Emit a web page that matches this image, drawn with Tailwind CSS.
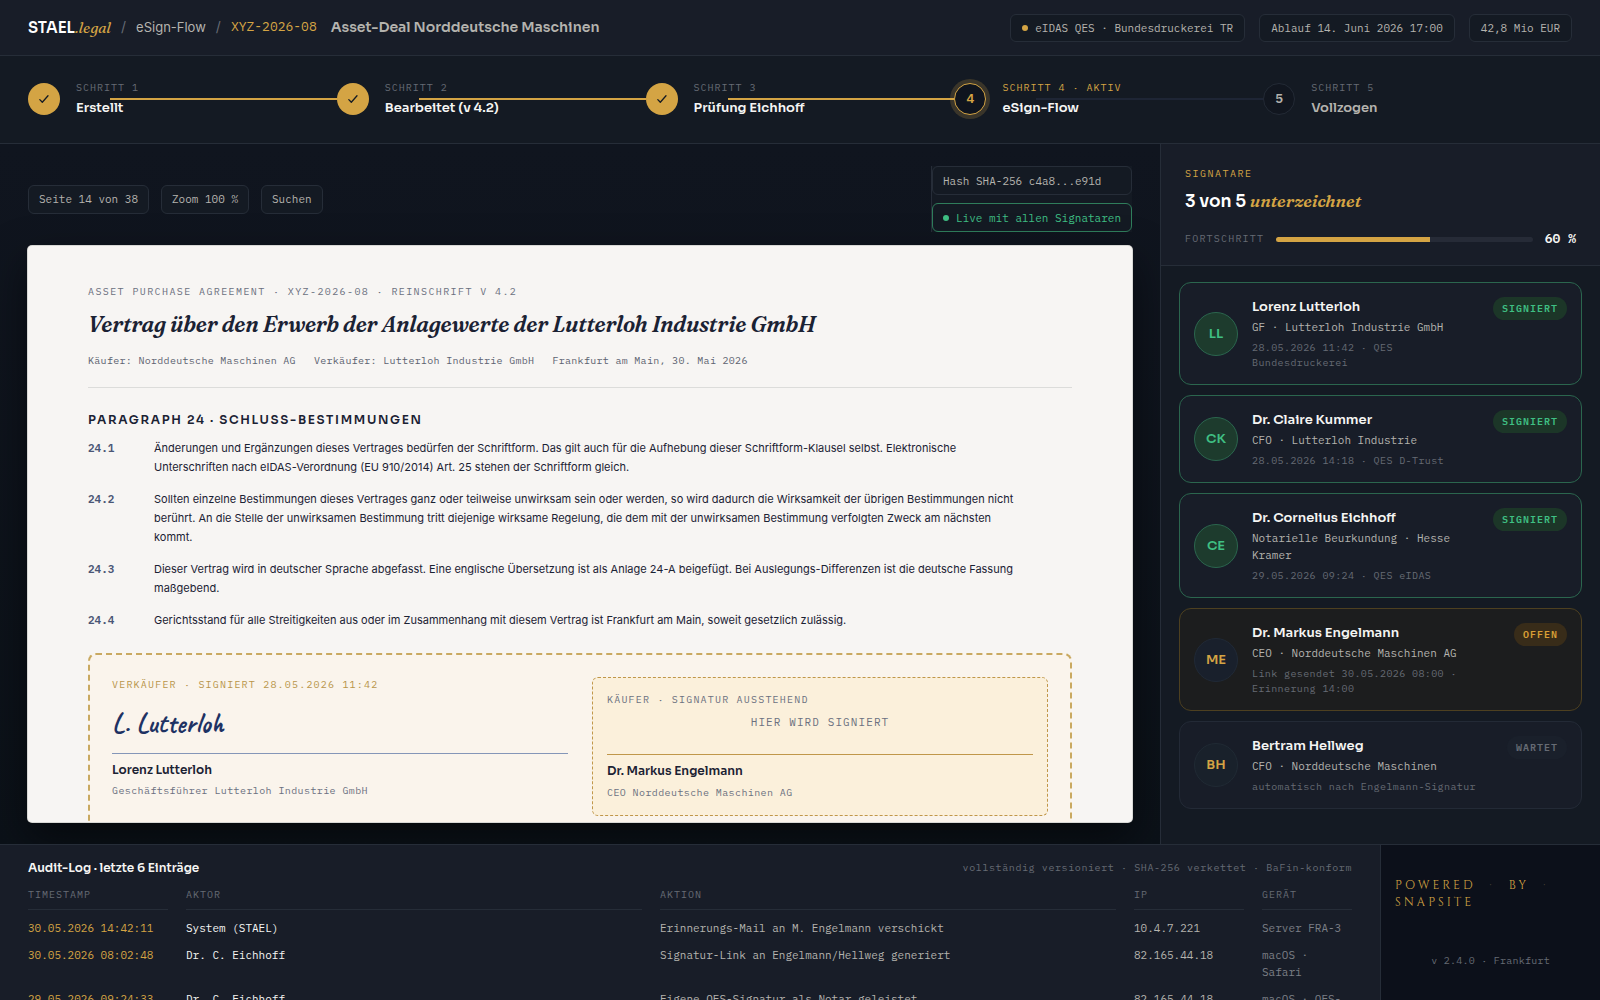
<!DOCTYPE html>
<html lang="de">
<head>
    <meta charset="UTF-8">
    <meta name="viewport" content="width=device-width, initial-scale=1.0">
    <title>STAEL.legal – eSign-Flow XYZ-2026-08</title>
    <script src="https://cdn.jsdelivr.net/npm/@tailwindcss/browser@4"></script>
    <style>
        :root {
            --font-sans: 'Sora', 'Inter', sans-serif;
            --font-serif: 'Fraunces', 'Liberation Serif', serif;
            --font-mono: 'IBM Plex Mono', 'Liberation Mono', monospace;
        }
    </style>
</head>
<body class="h-screen flex flex-col overflow-hidden bg-[#0f141e] font-sans text-[#f5f5f3]">

    <!-- Top bar -->
    <header class="flex items-center justify-between shrink-0 h-14 px-7 bg-[#181d28] border-b border-[#262d38]">
        <div class="flex items-center">
            <nav class="flex items-center gap-2.5 font-['Inter',sans-serif] text-sm text-[#b4b3ae]">
                <a href="#" class="flex items-baseline font-sans font-semibold text-[15px] text-white">STAEL<span class="font-serif italic font-medium text-[15px] text-[#d4a444]">.legal</span></a>
                <span class="text-[#666b74]">/</span>
                <a href="#" class="text-[13px]">eSign-Flow</a>
                <span class="text-[#666b74]">/</span>
                <a href="#" class="font-mono text-[13px] text-[#d4a444]">XYZ-2026-08</a>
            </nav>
            <h1 class="ml-3.5 text-sm font-semibold text-[#b4b3ae]">Asset-Deal Norddeutsche Maschinen</h1>
        </div>
        <div class="flex gap-3.5 font-mono text-[11px] leading-4 text-[#b4b3ae]">
            <span class="flex items-center gap-[7px] h-7 px-[11px] rounded-md border border-[#262d38] bg-[#141a23]"><i class="size-1.5 rounded-full bg-[#d4a444]"></i>eIDAS QES · Bundesdruckerei TR</span>
            <span class="flex items-center h-7 px-[11px] rounded-md border border-[#262d38] bg-[#141a23]">Ablauf 14. Juni 2026 17:00</span>
            <span class="flex items-center h-7 px-[11px] rounded-md border border-[#262d38] bg-[#141a23]">42,8 Mio EUR</span>
        </div>
    </header>

    <!-- Stepper -->
    <ol class="grid grid-cols-5 shrink-0 px-7 pt-[22px] pb-6 bg-[#141a23] border-b border-[#262d38]">
        <li class="relative flex items-center gap-4">
            <span class="flex items-center justify-center size-8 rounded-full bg-[#d4a444]">
                <svg class="size-3.5" viewBox="0 0 14 14" fill="none" stroke="#141a23" stroke-width="1.3" stroke-linecap="round" stroke-linejoin="round"><path d="M2.8 7.6 5.3 10.2 11 3.8"/></svg>
            </span>
            <div class="pt-0.5">
                <p class="font-mono text-[10px] leading-4 tracking-[0.1em] text-[#666b74]">SCHRITT 1</p>
                <p class="mt-px text-[13px] leading-[22px] font-semibold">Erstellt</p>
            </div>
            <i class="absolute left-[82px] right-0 top-1/2 h-0.5 -mt-px bg-[#d4a444]"></i>
        </li>
        <li class="relative flex items-center gap-4">
            <span class="flex items-center justify-center size-8 rounded-full bg-[#d4a444]">
                <svg class="size-3.5" viewBox="0 0 14 14" fill="none" stroke="#141a23" stroke-width="1.3" stroke-linecap="round" stroke-linejoin="round"><path d="M2.8 7.6 5.3 10.2 11 3.8"/></svg>
            </span>
            <div class="pt-0.5">
                <p class="font-mono text-[10px] leading-4 tracking-[0.1em] text-[#666b74]">SCHRITT 2</p>
                <p class="mt-px text-[13px] leading-[22px] font-semibold">Bearbeitet (v 4.2)</p>
            </div>
            <i class="absolute left-[82px] right-0 top-1/2 h-0.5 -mt-px bg-[#d4a444]"></i>
        </li>
        <li class="relative flex items-center gap-4">
            <span class="flex items-center justify-center size-8 rounded-full bg-[#d4a444]">
                <svg class="size-3.5" viewBox="0 0 14 14" fill="none" stroke="#141a23" stroke-width="1.3" stroke-linecap="round" stroke-linejoin="round"><path d="M2.8 7.6 5.3 10.2 11 3.8"/></svg>
            </span>
            <div class="pt-0.5">
                <p class="font-mono text-[10px] leading-4 tracking-[0.1em] text-[#666b74]">SCHRITT 3</p>
                <p class="mt-px text-[13px] leading-[22px] font-semibold">Prüfung Eichhoff</p>
            </div>
            <i class="absolute left-[82px] right-0 top-1/2 h-0.5 -mt-px bg-[#d4a444]"></i>
        </li>
        <li class="relative flex items-center gap-4" aria-current="step">
            <span class="flex items-center justify-center size-8 rounded-full border border-[#d4a444] bg-[#0f141e] ring-4 ring-[#d4a444]/20 font-mono text-[13px] font-semibold text-[#d4a444]">4</span>
            <div class="pt-0.5">
                <p class="font-mono text-[10px] leading-4 tracking-[0.1em] text-[#d4a444]">SCHRITT 4 · AKTIV</p>
                <p class="mt-px text-[13px] leading-[22px] font-semibold">eSign-Flow</p>
            </div>
            <i class="absolute left-[82px] right-0 top-1/2 h-0.5 -mt-px bg-[#1e2535]"></i>
        </li>
        <li class="relative flex items-center gap-4">
            <span class="flex items-center justify-center size-8 rounded-full border border-[#232a35] bg-[#11161f] font-mono text-[13px] font-semibold text-[#b4b3ae]">5</span>
            <div class="pt-0.5">
                <p class="font-mono text-[10px] leading-4 tracking-[0.1em] text-[#666b74]">SCHRITT 5</p>
                <p class="mt-px text-[13px] leading-[22px] font-semibold text-[#b4b3ae]">Vollzogen</p>
            </div>
        </li>
    </ol>

    <div class="flex flex-1 min-h-0">

        <!-- Document viewer -->
        <main class="flex flex-col flex-1 min-w-0 px-7 py-[22px] bg-linear-to-b from-[#10151f] to-[#0b1118]">
            <div class="flex items-center justify-between shrink-0 mb-3.5 font-mono text-[11px] leading-4 text-[#b4b3ae]">
                <div class="flex gap-3">
                    <button class="h-[29px] px-2.5 rounded-md border border-[#262d38] bg-[#141a23]">Seite 14 von 38</button>
                    <button class="h-[29px] px-2.5 rounded-md border border-[#262d38] bg-[#141a23]">Zoom 100 %</button>
                    <button class="h-[29px] px-2.5 rounded-md border border-[#262d38] bg-[#141a23]">Suchen</button>
                </div>
                <div class="flex flex-col gap-2 border-l border-[#262d38] bg-[#141a23]">
                    <span class="flex items-center h-[29px] px-2.5 rounded-md border border-[#262d38]">Hash SHA-256 c4a8...e91d</span>
                    <span class="flex items-center gap-[7px] h-[29px] px-2.5 rounded-md border border-[#2f7d5b] text-[#3fbf83]"><i class="size-1.5 rounded-full bg-[#3fbf83]"></i>Live mit allen Signataren</span>
                </div>
            </div>

            <article class="flex-1 min-h-0 overflow-hidden px-[60px] pt-[38px] rounded-sm bg-[#f7f5f3] ring-1 ring-[#d8d8d5] shadow-[0_16px_40px_rgba(0,0,0,0.5)] text-[#1b2233]">
                <p class="font-mono text-[10px] leading-4 tracking-[0.14em] text-[#6b7080]">ASSET PURCHASE AGREEMENT · XYZ-2026-08 · REINSCHRIFT V 4.2</p>
                <h2 class="mt-2 font-serif italic font-semibold text-[22px] leading-8 tracking-[-0.01em]">Vertrag über den Erwerb der Anlagewerte der Lutterloh Industrie GmbH</h2>
                <div class="flex gap-[18px] mt-[13px] pb-[18px] border-b border-[#dcdcda] font-mono text-[10px] leading-4 tracking-[0.03em] text-[#5c6270]">
                    <span>Käufer: Norddeutsche Maschinen AG</span>
                    <span>Verkäufer: Lutterloh Industrie GmbH</span>
                    <span>Frankfurt am Main, 30. Mai 2026</span>
                </div>

                <h3 class="mt-[22px] text-xs leading-5 font-semibold tracking-[0.14em]">PARAGRAPH 24 · SCHLUSS-BESTIMMUNGEN</h3>
                <dl class="grid grid-cols-[50px_1fr] gap-x-4 gap-y-[13px] mt-[9px] font-['Inter',sans-serif] text-[11px] leading-[19px]">
                    <dt class="font-mono font-semibold text-[#4a5675]">24.1</dt>
                    <dd class="pr-10">Änderungen und Ergänzungen dieses Vertrages bedürfen der Schriftform. Das gilt auch für die Aufhebung dieser Schriftform-Klausel selbst. Elektronische Unterschriften nach eIDAS-Verordnung (EU 910/2014) Art. 25 stehen der Schriftform gleich.</dd>
                    <dt class="font-mono font-semibold text-[#4a5675]">24.2</dt>
                    <dd class="pr-10">Sollten einzelne Bestimmungen dieses Vertrages ganz oder teilweise unwirksam sein oder werden, so wird dadurch die Wirksamkeit der übrigen Bestimmungen nicht berührt. An die Stelle der unwirksamen Bestimmung tritt diejenige wirksame Regelung, die dem mit der unwirksamen Bestimmung verfolgten Zweck am nächsten kommt.</dd>
                    <dt class="font-mono font-semibold text-[#4a5675]">24.3</dt>
                    <dd class="pr-10">Dieser Vertrag wird in deutscher Sprache abgefasst. Eine englische Übersetzung ist als Anlage 24-A beigefügt. Bei Auslegungs-Differenzen ist die deutsche Fassung maßgebend.</dd>
                    <dt class="font-mono font-semibold text-[#4a5675]">24.4</dt>
                    <dd class="pr-10">Gerichtsstand für alle Streitigkeiten aus oder im Zusammenhang mit diesem Vertrag ist Frankfurt am Main, soweit gesetzlich zulässig.</dd>
                </dl>

                <!-- Signature block -->
                <section class="grid grid-cols-2 items-start gap-6 mt-[23px] p-[22px] rounded-lg border-2 border-dashed border-[#c9a961] bg-[#faf4ec]">
                    <div>
                        <p class="font-mono text-[10px] leading-4 tracking-[0.12em] text-[#b8954a]">VERKÄUFER · SIGNIERT 28.05.2026 11:42</p>
                        <p class="flex items-center h-[61px] border-b border-[#8496b8] font-['Caveat',cursive] font-semibold text-[28px] text-[#1e3263]">L. Lutterloh</p>
                        <p class="mt-[5px] text-xs leading-[21px] font-semibold">Lorenz Lutterloh</p>
                        <p class="mt-[3px] font-mono text-[10px] leading-4 tracking-[0.04em] text-[#6b7080]">Geschäftsführer Lutterloh Industrie GmbH</p>
                    </div>
                    <div class="p-3.5 rounded-md border border-dashed border-[#c0974a] bg-[#fbf0db]">
                        <p class="font-mono text-[10px] leading-4 tracking-[0.12em] text-[#6b7080]">KÄUFER · SIGNATUR AUSSTEHEND</p>
                        <button class="block w-full h-[47px] pb-[18px] border-b border-[#c0974a] font-mono text-[11px] leading-4 tracking-[0.1em] text-[#6b7080]">HIER WIRD SIGNIERT</button>
                        <p class="mt-[5px] text-xs leading-[21px] font-semibold">Dr. Markus Engelmann</p>
                        <p class="mt-1 font-mono text-[10px] leading-4 tracking-[0.04em] text-[#6b7080]">CEO Norddeutsche Maschinen AG</p>
                    </div>
                </section>
            </article>
        </main>

        <!-- Signatories -->
        <aside class="w-[440px] shrink-0 border-l border-[#262d38] bg-[#141a23]">
            <div class="px-6 pt-[22px] pb-4 border-b border-[#262d38] bg-[#181d28]">
                <p class="font-mono text-[10px] leading-4 tracking-[0.15em] text-[#d4a444]">SIGNATARE</p>
                <h2 class="mt-1.5 text-[17px] leading-7 font-semibold text-white">3 von 5 <em class="font-serif font-semibold leading-none text-[#d4a444]">unterzeichnet</em></h2>
                <div class="flex items-center gap-3 mt-[13px]">
                    <span class="font-mono text-[10px] leading-5 tracking-[0.12em] text-[#666b74]">FORTSCHRITT</span>
                    <div class="flex-1 h-[5px] rounded-full overflow-hidden bg-[#262b37]"><div class="h-full bg-[#d4a444]" style="width: 60%"></div></div>
                    <span class="font-mono text-[13px] leading-5 font-semibold">60 %</span>
                </div>
            </div>

            <ul class="flex flex-col gap-2.5 px-[18px] py-4">
                <li class="flex items-center gap-3.5 p-3.5 rounded-xl border border-[#2b664e] bg-[#181d28]">
                    <span class="flex items-center justify-center shrink-0 size-11 rounded-full border border-[#2b664e] bg-[#1d3b2d] text-[13px] font-semibold text-[#3fbf83]">LL</span>
                    <div class="flex-1">
                        <p class="text-[13px] leading-[19px] font-semibold">Lorenz Lutterloh</p>
                        <p class="mt-[3px] font-mono text-[11px] leading-[17px] text-[#b4b3ae]">GF · Lutterloh Industrie GmbH</p>
                        <p class="mt-1 font-mono text-[10px] leading-[15px] tracking-[0.04em] text-[#666b74]">28.05.2026 11:42 · QES Bundesdruckerei</p>
                    </div>
                    <span class="self-start px-[9px] rounded-full bg-[#1c3628] font-mono text-[10px] leading-[23px] tracking-[0.1em] font-semibold text-[#3fbf83]">SIGNIERT</span>
                </li>
                <li class="flex items-center gap-3.5 p-3.5 rounded-xl border border-[#2b664e] bg-[#181d28]">
                    <span class="flex items-center justify-center shrink-0 size-11 rounded-full border border-[#2b664e] bg-[#1d3b2d] text-[13px] font-semibold text-[#3fbf83]">CK</span>
                    <div class="flex-1">
                        <p class="text-[13px] leading-[19px] font-semibold">Dr. Claire Kummer</p>
                        <p class="mt-[3px] font-mono text-[11px] leading-[17px] text-[#b4b3ae]">CFO · Lutterloh Industrie</p>
                        <p class="mt-1 font-mono text-[10px] leading-[15px] tracking-[0.04em] text-[#666b74]">28.05.2026 14:18 · QES D-Trust</p>
                    </div>
                    <span class="self-start px-[9px] rounded-full bg-[#1c3628] font-mono text-[10px] leading-[23px] tracking-[0.1em] font-semibold text-[#3fbf83]">SIGNIERT</span>
                </li>
                <li class="flex items-center gap-3.5 p-3.5 rounded-xl border border-[#2b664e] bg-[#181d28]">
                    <span class="flex items-center justify-center shrink-0 size-11 rounded-full border border-[#2b664e] bg-[#1d3b2d] text-[13px] font-semibold text-[#3fbf83]">CE</span>
                    <div class="flex-1">
                        <p class="text-[13px] leading-[19px] font-semibold">Dr. Cornelius Eichhoff</p>
                        <p class="mt-[3px] font-mono text-[11px] leading-[17px] text-[#b4b3ae]">Notarielle Beurkundung · Hesse Kramer</p>
                        <p class="mt-1 font-mono text-[10px] leading-[15px] tracking-[0.04em] text-[#666b74]">29.05.2026 09:24 · QES eIDAS</p>
                    </div>
                    <span class="self-start px-[9px] rounded-full bg-[#1c3628] font-mono text-[10px] leading-[23px] tracking-[0.1em] font-semibold text-[#3fbf83]">SIGNIERT</span>
                </li>
                <li class="flex items-center gap-3.5 p-3.5 rounded-xl border border-[#4d4020] bg-[#1c1d1e]">
                    <span class="flex items-center justify-center shrink-0 size-11 rounded-full border border-[#202936] bg-[#19202c] text-[13px] font-semibold text-[#d4a444]">ME</span>
                    <div class="flex-1">
                        <p class="text-[13px] leading-[19px] font-semibold">Dr. Markus Engelmann</p>
                        <p class="mt-[3px] font-mono text-[11px] leading-[17px] text-[#b4b3ae]">CEO · Norddeutsche Maschinen AG</p>
                        <p class="mt-1 font-mono text-[10px] leading-[15px] tracking-[0.04em] text-[#666b74]">Link gesendet 30.05.2026 08:00 · Erinnerung 14:00</p>
                    </div>
                    <span class="self-start px-[9px] rounded-full bg-[#382c19] font-mono text-[10px] leading-[23px] tracking-[0.1em] font-semibold text-[#d99f35]">OFFEN</span>
                </li>
                <li class="flex items-center gap-3.5 p-3.5 rounded-xl border border-[#232a36] bg-[#181d28]">
                    <span class="flex items-center justify-center shrink-0 size-11 rounded-full border border-[#202a34] bg-[#19212b] text-[13px] font-semibold text-[#d4a444]">BH</span>
                    <div class="flex-1">
                        <p class="text-[13px] leading-[19px] font-semibold">Bertram Hellweg</p>
                        <p class="mt-[3px] font-mono text-[11px] leading-[17px] text-[#b4b3ae]">CFO · Norddeutsche Maschinen</p>
                        <p class="mt-1 font-mono text-[10px] leading-[15px] tracking-[0.04em] text-[#666b74]">automatisch nach Engelmann-Signatur</p>
                    </div>
                    <span class="self-start px-[9px] rounded-full bg-[#1a202b] font-mono text-[10px] leading-[23px] tracking-[0.1em] font-semibold text-[#666b74]">WARTET</span>
                </li>
            </ul>
        </aside>
    </div>

    <!-- Audit log -->
    <footer class="flex shrink-0 h-[156px] overflow-hidden border-t border-[#262d38] bg-[#181d28]">
        <section class="flex-1 px-7 pt-[13px]">
            <div class="flex items-center justify-between leading-5">
                <h2 class="text-xs leading-5 font-semibold">Audit-Log · letzte 6 Einträge</h2>
                <p class="font-mono text-[10px] tracking-[0.06em] text-[#666b74]">vollständig versioniert · SHA-256 verkettet · BaFin-konform</p>
            </div>
            <table class="grid grid-cols-[140px_1fr_1fr_110px_90px] gap-x-[18px] mt-[9px] font-mono text-[11px] leading-[17px] text-left text-[#b4b3ae]">
                <thead class="contents text-[10px] leading-4 tracking-[0.1em] text-[#666b74]">
                    <tr class="contents">
                        <th class="pb-1.5 mb-[5px] border-b border-[#262d38] font-normal">TIMESTAMP</th>
                        <th class="pb-1.5 mb-[5px] border-b border-[#262d38] font-normal">AKTOR</th>
                        <th class="pb-1.5 mb-[5px] border-b border-[#262d38] font-normal">AKTION</th>
                        <th class="pb-1.5 mb-[5px] border-b border-[#262d38] font-normal">IP</th>
                        <th class="pb-1.5 mb-[5px] border-b border-[#262d38] font-normal">GERÄT</th>
                    </tr>
                </thead>
                <tbody class="contents">
                    <tr class="contents">
                        <td class="py-[5px] text-[#d4a444]">30.05.2026 14:42:11</td>
                        <td class="py-[5px] text-[#f5f5f3]">System (STAEL)</td>
                        <td class="py-[5px]">Erinnerungs-Mail an M. Engelmann verschickt</td>
                        <td class="py-[5px]">10.4.7.221</td>
                        <td class="py-[5px] text-[#7b7f86]">Server FRA-3</td>
                    </tr>
                    <tr class="contents">
                        <td class="py-[5px] text-[#d4a444]">30.05.2026 08:02:48</td>
                        <td class="py-[5px] text-[#f5f5f3]">Dr. C. Eichhoff</td>
                        <td class="py-[5px]">Signatur-Link an Engelmann/Hellweg generiert</td>
                        <td class="py-[5px]">82.165.44.18</td>
                        <td class="py-[5px] text-[#7b7f86]">macOS · Safari</td>
                    </tr>
                    <tr class="contents">
                        <td class="py-[5px] text-[#d4a444]">29.05.2026 09:24:33</td>
                        <td class="py-[5px] text-[#f5f5f3]">Dr. C. Eichhoff</td>
                        <td class="py-[5px]">Eigene QES-Signatur als Notar geleistet</td>
                        <td class="py-[5px]">82.165.44.18</td>
                        <td class="py-[5px] text-[#7b7f86]">macOS · QES-Token</td>
                    </tr>
                </tbody>
            </table>
        </section>
        <section class="w-[220px] shrink-0 px-3.5 pt-8 border-l border-[#262d38] bg-[#0c101a]">
            <p class="flex flex-wrap gap-x-3.5 font-['Cinzel','Liberation_Serif',serif] text-xs leading-[17px] tracking-[0.25em] text-[#d4a444]">
                <span>POWERED</span><span class="text-[#4a4538]">·</span><span>BY</span><span class="text-[#4a4538]">·</span><span>SNAPSITE</span>
            </p>
            <p class="mt-[42px] text-center font-mono text-[10px] leading-4 tracking-wide text-[#666b74]">v 2.4.0 · Frankfurt</p>
        </section>
    </footer>

</body>
</html>
